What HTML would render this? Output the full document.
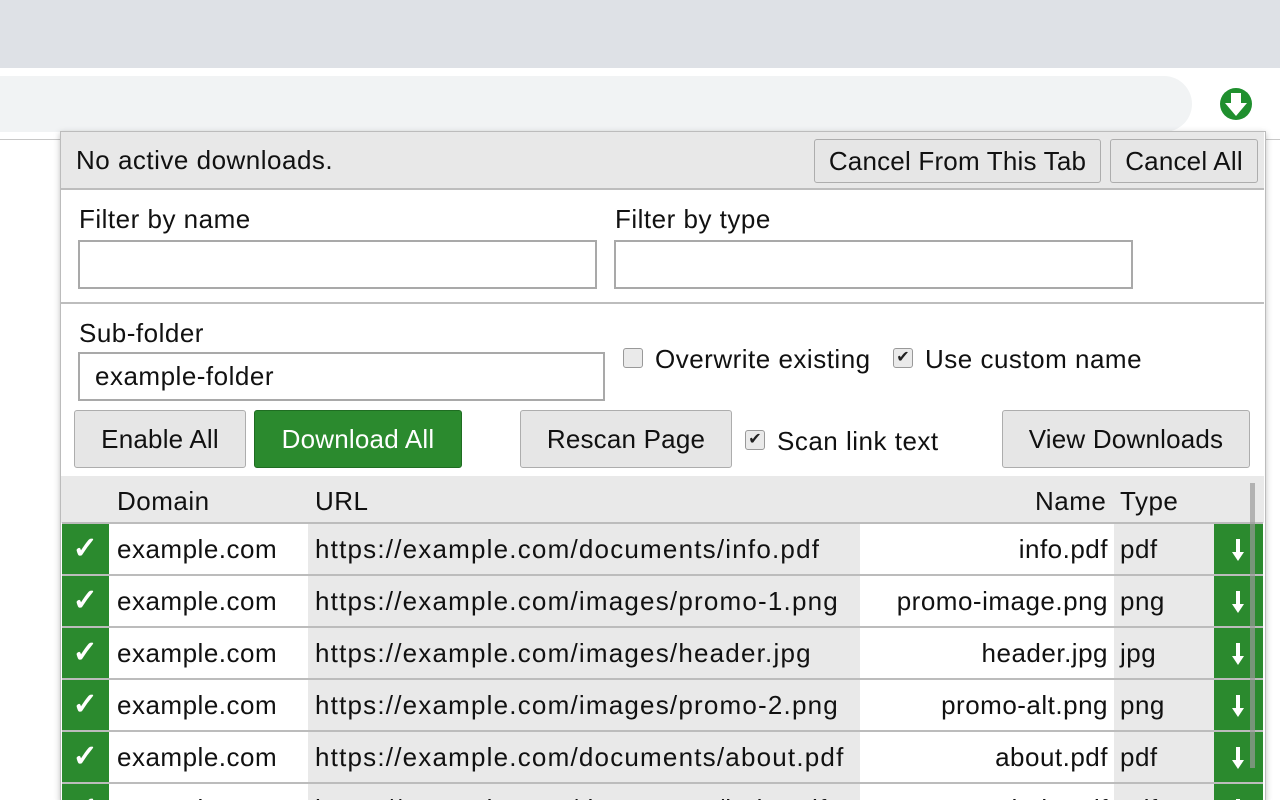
<!DOCTYPE html><html><head><style>
html,body{margin:0;width:1280px;height:800px;overflow:hidden}
body{background:#fff;font-family:"Liberation Sans",sans-serif;color:#111;position:relative}
.a{position:absolute}
.btn{position:absolute;background:#e6e6e6;border:1px solid #adadad;border-radius:3px;box-sizing:border-box;font-size:26px;text-align:center;color:#111;letter-spacing:0.2px}
.lbl{position:absolute;font-size:26px;letter-spacing:0.5px}
.inp{position:absolute;border:2px solid #a9a9a9;box-sizing:border-box;background:#fff;font-size:26px;letter-spacing:0.5px}
.cb{position:absolute;width:20px;height:20px;border:1px solid #999;border-radius:3px;background:#eaeaea;box-sizing:border-box;font-size:16px;line-height:18px;text-align:center;color:#222}
.row{position:absolute;left:62px;width:1201px;height:50px;border-top:2px solid #bcbcbc;font-size:26px;letter-spacing:0.5px}
.row div{position:absolute;top:0;height:50px;line-height:50px;white-space:nowrap}
</style></head><body>
<div class="a" style="left:0;top:0;width:1280px;height:68px;background:#dee1e6"></div>
<div class="a" style="left:0;top:68px;width:1280px;height:72px;background:#fff"></div>
<div class="a" style="left:-30px;top:76px;width:1222px;height:56px;background:#f1f3f4;border-radius:28px"></div>
<div class="a" style="left:0;top:139px;width:1280px;height:1px;background:#c8c8c8"></div>
<svg class="a" style="left:1219px;top:87px" width="34" height="34" viewBox="0 0 34 34"><circle cx="17" cy="17" r="16" fill="#1f8f2e"/><path d="M12 6h10v10h6L17 29 6 16h6z" fill="#fff"/></svg>

<div class="a" style="left:60px;top:131px;width:1204px;height:669px;border:1px solid #bcbcbc;border-bottom:none;background:#fff;box-shadow:0 2px 6px rgba(0,0,0,.25)"></div>
<div class="a" style="left:61px;top:132px;width:1203px;height:56px;background:#e8e8e8;border-bottom:2px solid #bdbdbd"></div>
<div class="lbl" style="left:76px;top:145px">No active downloads.</div>
<div class="btn" style="left:814px;top:139px;width:287px;height:44px;line-height:42px">Cancel From This Tab</div>
<div class="btn" style="left:1110px;top:139px;width:148px;height:44px;line-height:42px">Cancel All</div>

<div class="lbl" style="left:79px;top:204px">Filter by name</div>
<div class="inp" style="left:78px;top:240px;width:519px;height:49px"></div>
<div class="lbl" style="left:615px;top:204px">Filter by type</div>
<div class="inp" style="left:614px;top:240px;width:519px;height:49px"></div>
<div class="a" style="left:61px;top:302px;width:1203px;height:2px;background:#bdbdbd"></div>

<div class="lbl" style="left:79px;top:318px">Sub-folder</div>
<div class="inp" style="left:78px;top:352px;width:527px;height:49px;padding-left:15px;line-height:45px">example-folder</div>
<div class="cb" style="left:623px;top:348px"></div>
<div class="lbl" style="left:655px;top:344px">Overwrite existing</div>
<div class="cb" style="left:893px;top:348px">✔</div>
<div class="lbl" style="left:925px;top:344px">Use custom name</div>
<div class="btn" style="left:74px;top:410px;width:172px;height:58px;line-height:56px">Enable All</div>
<div class="btn" style="left:254px;top:410px;width:208px;height:58px;line-height:56px;background:#2b8a2e;border-color:#1f6d22;color:#fff">Download All</div>
<div class="btn" style="left:520px;top:410px;width:212px;height:58px;line-height:56px">Rescan Page</div>
<div class="cb" style="left:745px;top:430px">✔</div>
<div class="lbl" style="left:777px;top:426px">Scan link text</div>
<div class="btn" style="left:1002px;top:410px;width:248px;height:58px;line-height:56px">View Downloads</div>

<div class="a" style="left:61px;top:476px;width:1203px;height:47px;background:#e9e9e9"></div>
<div class="lbl" style="left:117px;top:486px">Domain</div>
<div class="lbl" style="left:315px;top:486px">URL</div>
<div class="lbl" style="left:1035px;top:486px">Name</div>
<div class="lbl" style="left:1120px;top:486px">Type</div>

<div id="rows"></div>
<script>
var d=[["documents/info.pdf","info.pdf","pdf"],["images/promo-1.png","promo-image.png","png"],["images/header.jpg","header.jpg","jpg"],["images/promo-2.png","promo-alt.png","png"],["documents/about.pdf","about.pdf","pdf"],["documents/help.pdf","help.pdf","pdf"]];
var h="";d.forEach(function(r,i){var t=522+i*52;
h+='<div class="row" style="top:'+t+'px"><div style="left:0;width:47px;background:#2b8a2e;color:#fff;text-align:center;font-size:30px;font-weight:bold">✓</div><div style="left:47px;width:199px;background:#fff;padding-left:8px;box-sizing:border-box">example.com</div><div style="left:246px;width:552px;background:#e9e9e9;padding-left:7px;box-sizing:border-box;letter-spacing:1.2px">https://example.com/'+r[0]+'</div><div style="left:798px;width:254px;background:#fff;text-align:right;padding-right:6px;box-sizing:border-box">'+r[1]+'</div><div style="left:1052px;width:100px;background:#e9e9e9;padding-left:6px;box-sizing:border-box">'+r[2]+'</div><div style="left:1152px;width:49px;background:#2b8a2e"><svg style="position:absolute;left:17px;top:15px" width="14" height="22" viewBox="0 0 14 22"><path d="M5 0h4v13h4L7 22 1 13h4z" fill="#fff"/></svg></div></div>';});
document.getElementById("rows").innerHTML=h;
</script>
<div class="a" style="left:1250px;top:483px;width:5px;height:285px;background:#9a9a9a;opacity:.7"></div>
</body></html>
